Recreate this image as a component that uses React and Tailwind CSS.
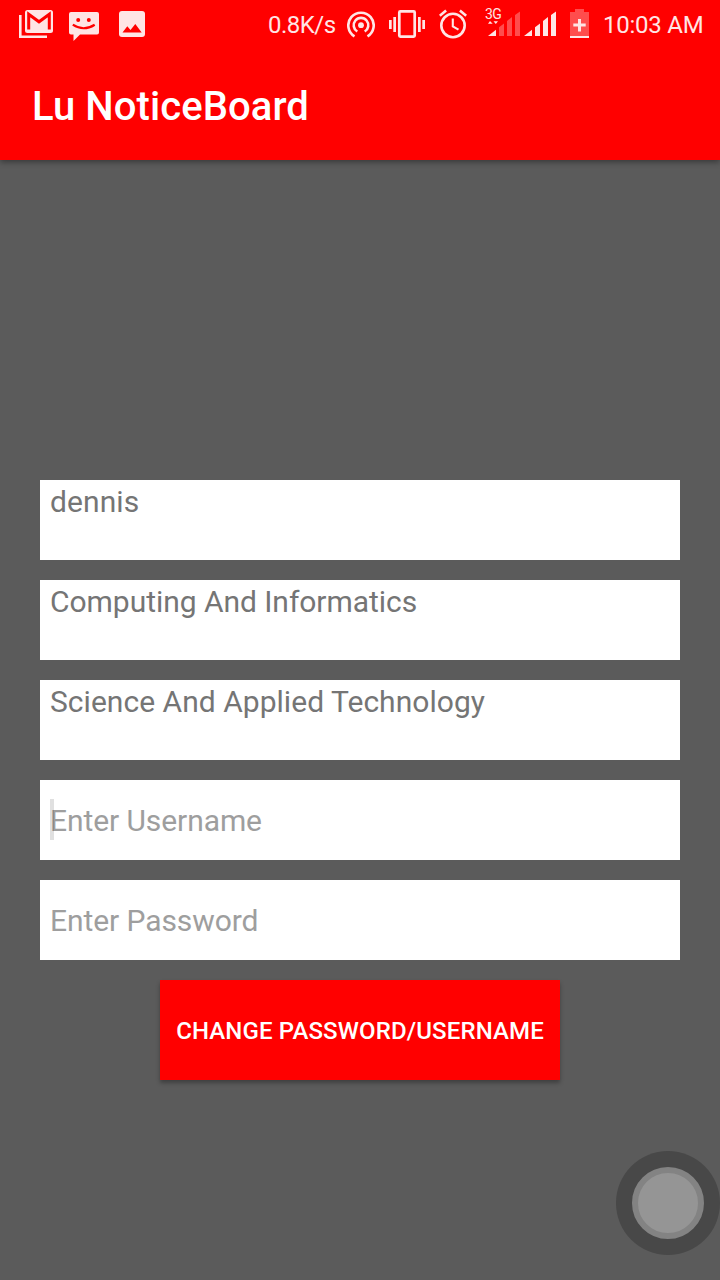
const notices = [
  { label: "dennis", tracking: "tracking-[0.1px]" },
  { label: "Computing And Informatics", tracking: "tracking-[-0.04px]" },
  { label: "Science And Applied Technology", tracking: "tracking-[0.03px]" },
];

function GmailIcon() {
  return (
    <svg className="ml-[19px] h-12 w-[34px] shrink-0" viewBox="19 0 34 48" fill="none">
      <path d="M20.3 15V36.7H47" stroke="#ffe5e5" strokeWidth="2.6" />
      <rect x="25" y="10" width="28" height="23" rx="2.5" fill="#ffe5e5" />
      <path d="M28.7 29.5V14.2L39 21.8L49.3 14.2V29.5" stroke="#f00" strokeWidth="3" />
    </svg>
  );
}

function MessageIcon() {
  return (
    <svg className="ml-4 h-12 w-[30px] shrink-0" viewBox="69 0 30 48" fill="none">
      <path d="M71 12H97Q99 12 99 14V32.5Q99 34.5 97 34.5H80L73.5 41V34.5H71Q69 34.5 69 32.5V14Q69 12 71 12Z" fill="#ffe5e5" />
      <circle cx="78.2" cy="20" r="2" fill="#f00" />
      <circle cx="88.8" cy="20" r="2" fill="#f00" />
      <path d="M72.8 24.7Q83.5 31.8 94.7 24.7" stroke="#f00" strokeWidth="2.2" />
    </svg>
  );
}

function PictureIcon() {
  return (
    <svg className="ml-5 h-12 w-[26px] shrink-0" viewBox="119 0 26 48">
      <rect x="119" y="11" width="26" height="26" rx="3" fill="#ffe5e5" />
      <path d="M122.5 32.5L127.3 26.2L130.5 30L135.3 24L141.7 32.5Z" fill="#f00" />
    </svg>
  );
}

function HotspotIcon() {
  return (
    <svg className="ml-3 h-12 w-7 shrink-0" viewBox="347 0 28 48" fill="none" stroke="#ffe5e5" strokeWidth="2.6">
      <path d="M354.5 36.3A12.7 12.7 0 1 1 367.5 36.3" />
      <path d="M357.3 31.5A7.3 7.3 0 1 1 364.7 31.5" />
      <circle cx="361" cy="25.2" r="2.9" fill="#ffe5e5" stroke="none" />
    </svg>
  );
}

function VibrateIcon() {
  return (
    <svg className="ml-3.5 h-12 w-9 shrink-0" viewBox="389 0 36 48">
      <rect x="399.3" y="11.4" width="15.4" height="25.2" rx="1" fill="none" stroke="#ffe5e5" strokeWidth="2.7" />
      <path d="M389 20H391.7V29H389ZM393.3 17H396V32H393.3ZM418 17H420.7V32H418ZM422.3 20H425V29H422.3Z" fill="#ffe5e5" />
    </svg>
  );
}

function AlarmIcon() {
  return (
    <svg className="ml-3.5 h-12 w-7 shrink-0" viewBox="439 0 28 48" fill="none" stroke="#ffe5e5" strokeWidth="2.6">
      <circle cx="453" cy="25.5" r="11.7" />
      <path d="M452.8 18.5V26.3L458.5 29.7" strokeWidth="2.1" />
      <path d="M439.8 15.7L446.1 10.5M459.9 10.5L466.2 15.7" />
    </svg>
  );
}

function DataSignal() {
  return (
    <div className="relative ml-[17px] h-12 w-9 shrink-0">
      <span className="absolute top-[7px] left-px text-[14px] leading-[14px] tracking-[-0.5px]">3G</span>
      <svg className="h-12 w-9" viewBox="484 0 36 48" fill="#ffe5e5">
        <path d="M488 23.7L490 21L492.7 23.7ZM493.5 21.3H498L495.8 24Z" />
        <path d="M488 36L496 29.7V36Z" />
        <path d="M499 27.3L504 23.5V36H499ZM507 21L512 17V36H507ZM515 15L520 11.5V36H515Z" fill="#ff4d4d" />
      </svg>
    </div>
  );
}

function Signal() {
  return (
    <svg className="ml-1 h-12 w-8 shrink-0" viewBox="524 0 32 48" fill="#ffe5e5">
      <path d="M524 36L532 29.7V36ZM535 27.3L540 23.5V36H535ZM543 21L548 17V36H543ZM551 15L556 11.5V36H551Z" />
    </svg>
  );
}

function BatteryIcon() {
  return (
    <svg className="ml-3.5 h-12 w-[19px] shrink-0" viewBox="570 0 19 48">
      <path d="M575 9H584V12H589V36H570V12H575Z" fill="#ff4d4d" />
      <path d="M570 36H589V38H570ZM578 19H581V23.5H585.7V26.5H581V31.5H578V26.5H573.3V23.5H578Z" fill="#ffe5e5" />
    </svg>
  );
}

export default function App() {
  return (
    <div className="relative flex h-[1280px] w-[720px] flex-col overflow-hidden bg-[#5b5b5b] font-['Roboto',sans-serif]">
      <header className="z-10 h-40 shrink-0 bg-[#ff0000] shadow-[0_2px_6px_rgba(0,0,0,0.4)]">
        <div className="flex h-12 items-center text-[#ffe5e5]">
          <GmailIcon />
          <MessageIcon />
          <PictureIcon />
          <span className="ml-[123px] w-[67px] shrink-0 pt-0.5 text-[24px] leading-7 tracking-[-0.5px] whitespace-nowrap">0.8K/s</span>
          <HotspotIcon />
          <VibrateIcon />
          <AlarmIcon />
          <DataSignal />
          <Signal />
          <BatteryIcon />
          <span className="ml-3.5 shrink-0 pt-0.5 text-[24px] leading-7 tracking-[-0.25px] whitespace-nowrap">10:03 AM</span>
        </div>
        <h1 className="flex h-28 items-center pt-1.5 pl-8 text-[40px] font-medium tracking-[0.07px] text-white">Lu NoticeBoard</h1>
      </header>

      <main className="mx-10 mt-80 flex flex-col gap-5">
        {notices.map(({ label, tracking }) => (
          <div key={label} className={`h-20 bg-white pt-1 pl-2.5 text-[30px] leading-9 text-[#757575] ${tracking}`}>
            {label}
          </div>
        ))}
        <div className="relative flex h-20 items-center bg-white pl-2.5 text-[30px] tracking-[-0.08px] text-[#9e9e9e]">
          <span className="absolute top-[19px] left-2.5 h-[41px] w-1 bg-black/12" />
          Enter Username
        </div>
        <div className="flex h-20 items-center bg-white pl-2.5 text-[30px] tracking-[-0.08px] text-[#9e9e9e]">Enter Password</div>
        <button className="h-[100px] w-[400px] self-center bg-[#ff0000] pt-0.5 text-[24px] font-medium tracking-[0.13px] whitespace-nowrap text-white shadow-[0_3px_4px_rgba(0,0,0,0.3)]">
          CHANGE PASSWORD/USERNAME
        </button>
      </main>

      <div className="absolute top-[1151px] left-[616px] flex size-[104px] items-center justify-center rounded-full bg-[#484848]">
        <div className="size-[72px] rounded-full border-[6px] border-[#838383] bg-[#959595]" />
      </div>
    </div>
  );
}
